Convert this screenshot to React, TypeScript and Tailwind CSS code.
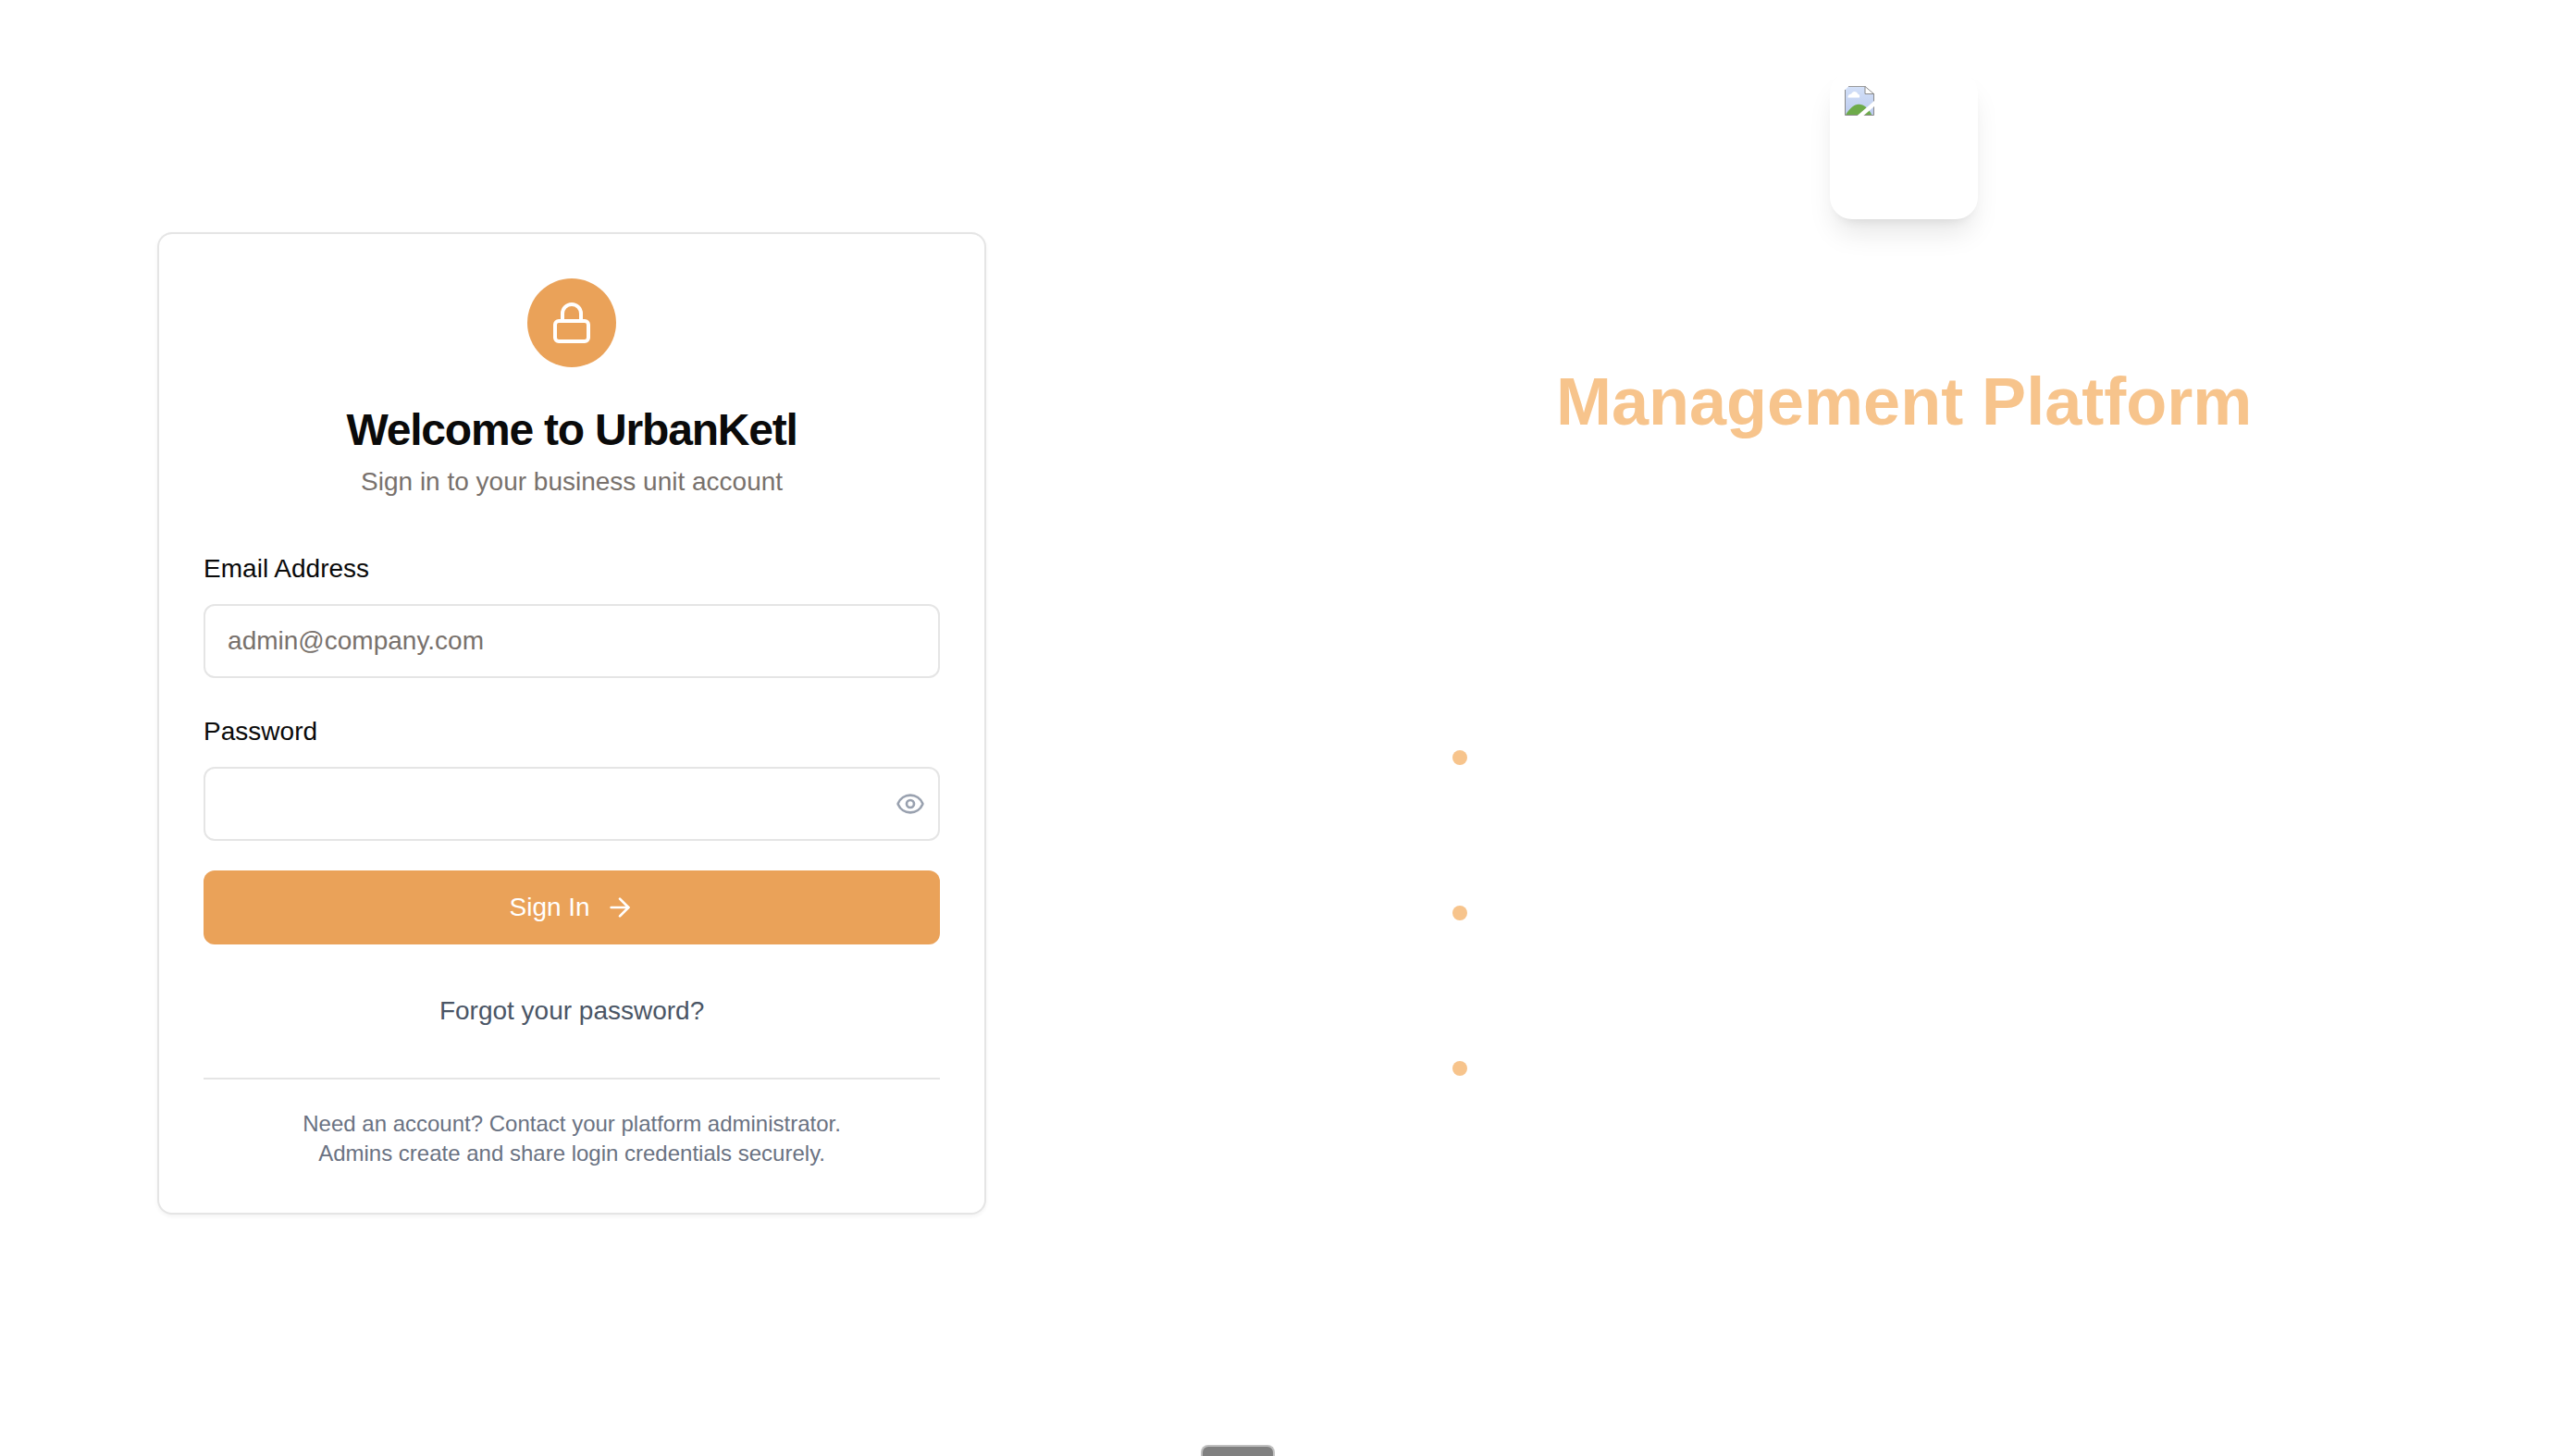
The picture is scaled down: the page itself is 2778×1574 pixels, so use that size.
import { useState } from "react";
import { ArrowRight, Eye, Lock } from "lucide-react";

const field =
  "block h-20 w-full rounded-xl border-2 border-[#e5e5e5] bg-white px-6 text-[28px] text-[#0a0a0a] placeholder:text-[#78716c] placeholder:opacity-100 outline-none focus:border-[#eaa259]";

function MissingImage() {
  return (
    <svg width="32" height="32" viewBox="0 0 16 16" role="img" aria-label="Logo unavailable">
      <defs>
        <linearGradient id="sky" x1="0" y1="0" x2="0" y2="1">
          <stop offset="0" stopColor="#d3e0f8" />
          <stop offset="1" stopColor="#bccbee" />
        </linearGradient>
      </defs>
      <path d="M0.25 2 L2 0.25 H11 L15.75 4.5 V15.75 H0.25 Z" fill="url(#sky)" />
      <path d="M1.7 6.3 C1.6 5 2.6 4.3 3.6 4.3 C4 2.7 6.4 2.6 7 4.2 C8 4.4 8.4 5.4 7.9 6.3 Z" fill="#fff" />
      <path d="M0.5 15.6 C2.8 12 5 9.9 7.6 9.9 C10.4 9.9 12.8 12 14.6 15.6 Z" fill="#6eab4a" />
      <path d="M0.25 2 V15.75 H15.75 V4" fill="none" stroke="#8a8a8a" strokeWidth="0.5" />
      <path d="M2 0.25 H11.2" fill="none" stroke="#9a9a9a" strokeWidth="0.5" />
      <path d="M11 0.25 V4.25 H15.75 Z" fill="#fff" stroke="#8a8a8a" strokeWidth="0.5" />
      <path d="M6.8 16 L16 8 V11 L10.2 16 Z" fill="#fff" />
    </svg>
  );
}

export default function App() {
  const [visible, setVisible] = useState(false);

  return (
    <div className="relative flex min-h-screen overflow-hidden bg-white font-['Liberation_Sans',Arial,sans-serif] text-[#0a0a0a]">
      <main className="flex w-[44.5%] justify-center px-6 pt-[251px]">
        <div className="h-fit w-full max-w-4xl rounded-2xl border-2 border-[#e5e5e5] bg-white p-12 shadow-[0_2px_4px_rgba(0,0,0,0.05)]">
          <header className="flex flex-col items-center text-center">
            <div className="flex size-24 items-center justify-center rounded-full bg-[#eaa259] text-white">
              <Lock size={48} />
            </div>
            <h1 className="mt-11 text-5xl leading-none font-bold tracking-tight">Welcome to UrbanKetl</h1>
            <p className="mt-3 text-[28px] leading-10 text-[#78716c]">Sign in to your business unit account</p>
          </header>

          <form className="mt-15" onSubmit={(e) => e.preventDefault()}>
            <label htmlFor="email" className="block text-[28px] leading-7">
              Email Address
            </label>
            <input id="email" type="email" placeholder="admin@company.com" className={`mt-6 ${field}`} />

            <label htmlFor="password" className="mt-11 block text-[28px] leading-7">
              Password
            </label>
            <div className="relative mt-6">
              <input id="password" type={visible ? "text" : "password"} className={`pr-16 ${field}`} />
              <button
                type="button"
                aria-label={visible ? "Hide password" : "Show password"}
                onClick={() => setVisible(!visible)}
                className="absolute inset-y-0 right-4 flex items-center text-[#99a1af]"
              >
                <Eye size={32} />
              </button>
            </div>

            <button
              type="submit"
              className="mt-8 flex h-20 w-full items-center justify-center gap-4 rounded-xl bg-[#eaa259] text-[28px] text-white"
            >
              Sign In
              <ArrowRight size={32} />
            </button>
          </form>

          <div className="mt-8 flex h-20 items-center justify-center">
            <a href="#forgot" className="text-[28px] leading-10 text-[#4a5565]">
              Forgot your password?
            </a>
          </div>

          <p className="mt-8 border-t-2 border-[#e5e5e5] pt-8 text-center text-2xl leading-8 text-[#6a7282]">
            Need an account? Contact your platform administrator.
            <br />
            Admins create and share login credentials securely.
          </p>
        </div>
      </main>

      <aside className="flex flex-1 flex-col items-center pt-[77px] pl-[102px]">
        <div className="size-40 rounded-3xl bg-white p-4 shadow-[0_20px_30px_-6px_rgba(0,0,0,0.1),0_8px_12px_-8px_rgba(0,0,0,0.1)]">
          <MissingImage />
        </div>
        <h2 className="mt-38 text-7xl leading-[90px] font-bold text-[#f7c48c]">Management Platform</h2>
        <ul className="mt-83 flex w-full max-w-[976px] flex-col gap-38">
          <li className="size-4 rounded-full bg-[#f7c48c]" />
          <li className="size-4 rounded-full bg-[#f7c48c]" />
          <li className="size-4 rounded-full bg-[#f7c48c]" />
        </ul>
      </aside>

      <div className="absolute bottom-0 left-[1298px] h-3 w-20 rounded-t-lg border-2 border-b-0 border-[#bfbfbf] bg-[#808080]" />
    </div>
  );
}
